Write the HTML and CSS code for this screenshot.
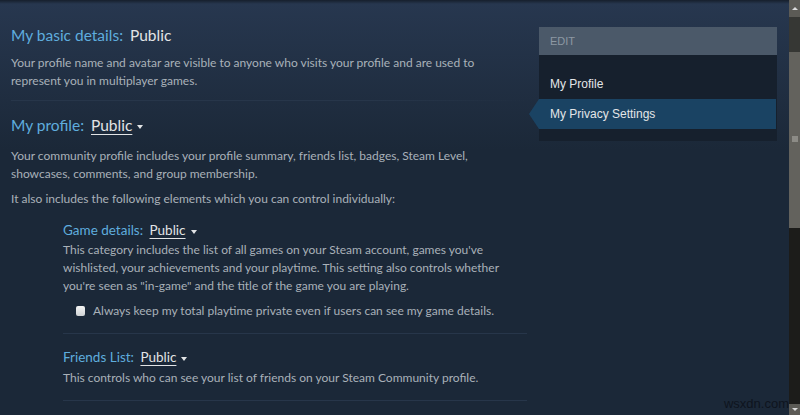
FILE: index.html
```html
<!DOCTYPE html>
<html lang="en">
<head>
    <meta charset="UTF-8">
    <title>Privacy Settings</title>
    <link rel="stylesheet" href="styles.css">
</head>
<body>
    <div class="window">
        <div class="page">
            <div class="main">
                <div class="setting">
                    <div class="setting-title">My basic details: <span class="value">Public</span></div>
                    <p class="desc">Your profile name and avatar are visible to anyone who visits your profile and are used to represent you in multiplayer games.</p>
                </div>

                <div class="setting">
                    <div class="setting-title">My profile: <span class="value dropdown">Public</span><span class="caret"></span></div>
                    <p class="desc intro">Your community profile includes your profile summary, friends list, badges, Steam Level, showcases, comments, and group membership.</p>
                    <p class="desc">It also includes the following elements which you can control individually:</p>

                    <div class="sub-setting">
                        <div class="setting-title">Game details: <span class="value dropdown">Public</span><span class="caret"></span></div>
                        <p class="desc">This category includes the list of all games on your Steam account, games you've wishlisted, your achievements and your playtime. This setting also controls whether you're seen as "in-game" and the title of the game you are playing.</p>
                        <label class="check-row"><span class="checkbox"></span>Always keep my total playtime private even if users can see my game details.</label>
                    </div>

                    <div class="sub-setting">
                        <div class="setting-title">Friends List: <span class="value dropdown">Public</span><span class="caret"></span></div>
                        <p class="desc">This controls who can see your list of friends on your Steam Community profile.</p>
                    </div>
                </div>
            </div>

            <div class="side">
                <div class="side-box">
                    <div class="side-header">EDIT</div>
                    <div class="side-links">
                        <a class="side-link">My Profile</a>
                        <a class="side-link active">My Privacy Settings</a>
                    </div>
                </div>
                <div class="watermark">wsxdn.com</div>
            </div>
        </div>

        <div class="scrollbar">
            <div class="scroll-btn up"></div>
            <div class="scroll-gap"></div>
            <div class="scroll-thumb"><span class="grip"></span></div>
            <div class="scroll-rest"></div>
            <div class="scroll-btn down"></div>
        </div>
    </div>
</body>
</html>
```

FILE: styles.css
```css
* {
    margin: 0;
    padding: 0;
    box-sizing: border-box;
}

html, body {
    width: 800px;
    height: 415px;
    overflow: hidden;
}

body {
    background-color: #1b2838;
    font-family: 'Lato', 'Noto Sans', sans-serif;
}

.window {
    display: grid;
    grid-template-columns: 789px 11px;
    grid-template-rows: 415px;
    width: 800px;
    height: 415px;
}

.page {
    display: flex;
    min-height: 0;
    overflow: hidden;
    padding: 0 12px 0 11px;
    background:
        linear-gradient(to bottom, #161f2c 0px, #27374f 4px, rgba(39, 55, 79, 0) 150px),
        #1b2838;
}

.main {
    width: 516px;
    padding-top: 25px;
}

.setting-title {
    font-size: 15.5px;
    line-height: 20px;
    color: #5fadde;
    white-space: nowrap;
}

.value {
    color: #e2e4e6;
    margin-left: 3px;
}

.dropdown {
    text-decoration: underline;
    text-underline-offset: 3px;
    text-decoration-thickness: 1px;
}

.caret {
    display: inline-block;
    margin-left: 5px;
    vertical-align: middle;
    border-left: 3px solid transparent;
    border-right: 3px solid transparent;
    border-top: 4px solid #e2e4e6;
}

.desc {
    font-size: 12px;
    line-height: 18px;
    color: #a9b1b9;
    margin-top: 7px;
}

.setting > .setting-title + .desc {
    margin-top: 9px;
}

.setting > .desc.intro {
    margin-top: 12px;
}

.setting {
    padding-bottom: 10px;
    margin-bottom: 14px;
    border-bottom: 1px solid;
    border-image: linear-gradient(to right, #27364a, #27364a 70%, rgba(39, 54, 74, 0)) 1;
}

.setting:last-child {
    border: none;
    padding-bottom: 0;
    margin-bottom: 0;
}

.sub-setting {
    margin-left: 52px;
    margin-top: 12px;
    padding-bottom: 13px;
    border-bottom: 1px solid #27364a;
}

.sub-setting + .sub-setting {
    margin-top: 13px;
}

.sub-setting .setting-title {
    font-size: 13.5px;
}

.sub-setting .desc {
    margin-top: 1px;
}

.sub-setting + .sub-setting .desc {
    margin-top: 2px;
}

.check-row {
    display: flex;
    align-items: center;
    margin: 7px 0 0 13px;
    font-size: 12px;
    line-height: 18px;
    color: #a9b1b9;
}

.checkbox {
    width: 9px;
    height: 10px;
    margin-right: 8px;
    border-radius: 2px;
    background: linear-gradient(#f4f4f4, #cfd2d4);
}

.side {
    margin-left: 12px;
    padding-top: 27px;
    display: flex;
    flex-direction: column;
}

.side-box {
    width: 238px;
    background-color: #16202d;
    font-family: 'Liberation Sans', Arial, sans-serif;
}

.side-header {
    height: 28px;
    line-height: 28px;
    padding-left: 11px;
    background-color: #4b5969;
    font-size: 11px;
    color: #8d98a3;
}

.side-links {
    padding: 14px 0 12px;
}

.side-link {
    display: block;
    height: 30px;
    line-height: 30px;
    padding-left: 11px;
    font-size: 12px;
    color: #e4e6e8;
}

.side-link.active {
    position: relative;
    margin-right: 1px;
    background-color: #1a4363;
}

/* pointer on the left of the selected link */
.side-link.active::before {
    content: '';
    position: absolute;
    left: -10px;
    top: 0;
    border-top: 15px solid transparent;
    border-bottom: 15px solid transparent;
    border-right: 10px solid #1a4363;
}

.watermark {
    margin-top: auto;
    margin-bottom: 4px;
    align-self: flex-end;
    margin-right: -12px;
    font-family: 'Liberation Sans', Arial, sans-serif;
    font-size: 13px;
    line-height: 14px;
    color: #0e141e;
}

/* fake window scrollbar on the right edge */
.scrollbar {
    display: grid;
    grid-template-rows: 17px 35px 176px 1fr 11px;
    background-color: #1c1c1a;
}

.scroll-btn {
    background-color: #5c5b56;
    display: flex;
    align-items: center;
    justify-content: center;
}

.scroll-btn::after {
    content: '';
    border-left: 3px solid transparent;
    border-right: 3px solid transparent;
}

.scroll-btn.up::after {
    border-bottom: 3px solid #dcdcdc;
}

.scroll-btn.down::after {
    border-top: 3px solid #dcdcdc;
}

.scroll-gap {
    background-color: #363734;
}

.scroll-thumb {
    background-color: #63625d;
    display: flex;
    justify-content: center;
    padding-top: 84px;
}

.scroll-rest {
    background-color: #1c1c1a;
}

.grip {
    width: 6px;
    height: 6px;
    background-color: #8c8b86;
}
```
